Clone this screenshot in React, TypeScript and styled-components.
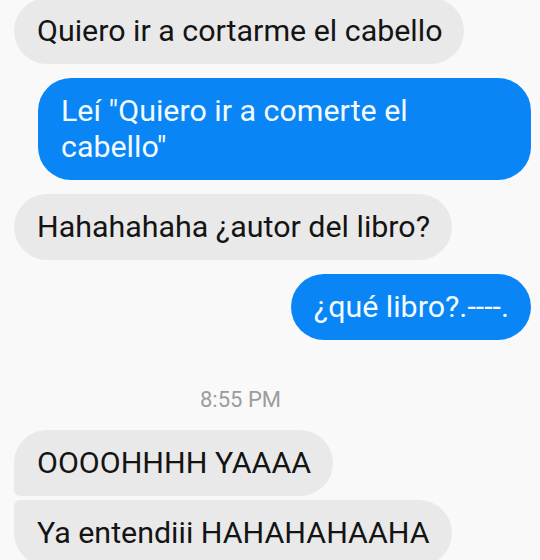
import React from 'react';
import styled, { createGlobalStyle } from 'styled-components';

type Sender = 'me' | 'them';
type Position = 'single' | 'first' | 'last';

type Message = {
  id: number;
  from: Sender;
  text: string;
  position?: Position;
  time?: string;
};

const messages: Message[] = [
  { id: 1, from: 'them', text: 'Quiero ir a cortarme el cabello' },
  { id: 2, from: 'me', text: 'Leí "Quiero ir a comerte el cabello"' },
  { id: 3, from: 'them', text: 'Hahahahaha ¿autor del libro?' },
  { id: 4, from: 'me', text: '¿qué libro?.----.' },
  { id: 5, from: 'them', text: 'OOOOHHHH YAAAA', position: 'first', time: '8:55 PM' },
  { id: 6, from: 'them', text: 'Ya entendiii HAHAHAHAAHA', position: 'last' },
];

const GlobalStyle = createGlobalStyle`
  html, body {
    margin: 0;
    padding: 0;
    background: #f9f9f9;
  }
  body {
    width: 540px;
    height: 560px;
    overflow: hidden;
    font-family: Roboto, 'Noto Sans', sans-serif;
  }
`;

const App: React.FC = () => (
  <>
    <GlobalStyle />
    <StyledThread>
      {messages.map((message) => (
        <React.Fragment key={message.id}>
          {message.time && <StyledTimestamp>{message.time}</StyledTimestamp>}
          <StyledBubble $from={message.from} $position={message.position || 'single'}>
            {message.text}
          </StyledBubble>
        </React.Fragment>
      ))}
    </StyledThread>
  </>
);

const StyledThread = styled.div`
  display: flex;
  flex-direction: column;
  padding: 0 9px 0 14px;
`;

const StyledBubble = styled.div<{ $from: Sender; $position: Position }>`
  align-self: ${({ $from }) => ($from === 'me' ? 'flex-end' : 'flex-start')};
  max-width: 448px;
  margin-top: ${({ $position }) => ($position === 'last' ? '4px' : '14px')};
  padding: 15px 22px 15px 23px;
  border-radius: ${({ $position }) =>
    $position === 'first' ? '33px 33px 33px 6px' : $position === 'last' ? '6px 33px 33px 33px' : '33px'};
  background: ${({ $from }) => ($from === 'me' ? '#0a85f5' : '#e9e9e9')};
  color: ${({ $from }) => ($from === 'me' ? '#f2fbff' : '#141414')};
  font-size: 30.4px;
  line-height: 36px;

  &:first-child {
    margin-top: -2px;
  }
`;

const StyledTimestamp = styled.div`
  align-self: flex-start;
  margin: 47px 0 3px 186px;
  color: #9c9c9c;
  font-size: 22px;
  line-height: 26px;
`;

export default App;
